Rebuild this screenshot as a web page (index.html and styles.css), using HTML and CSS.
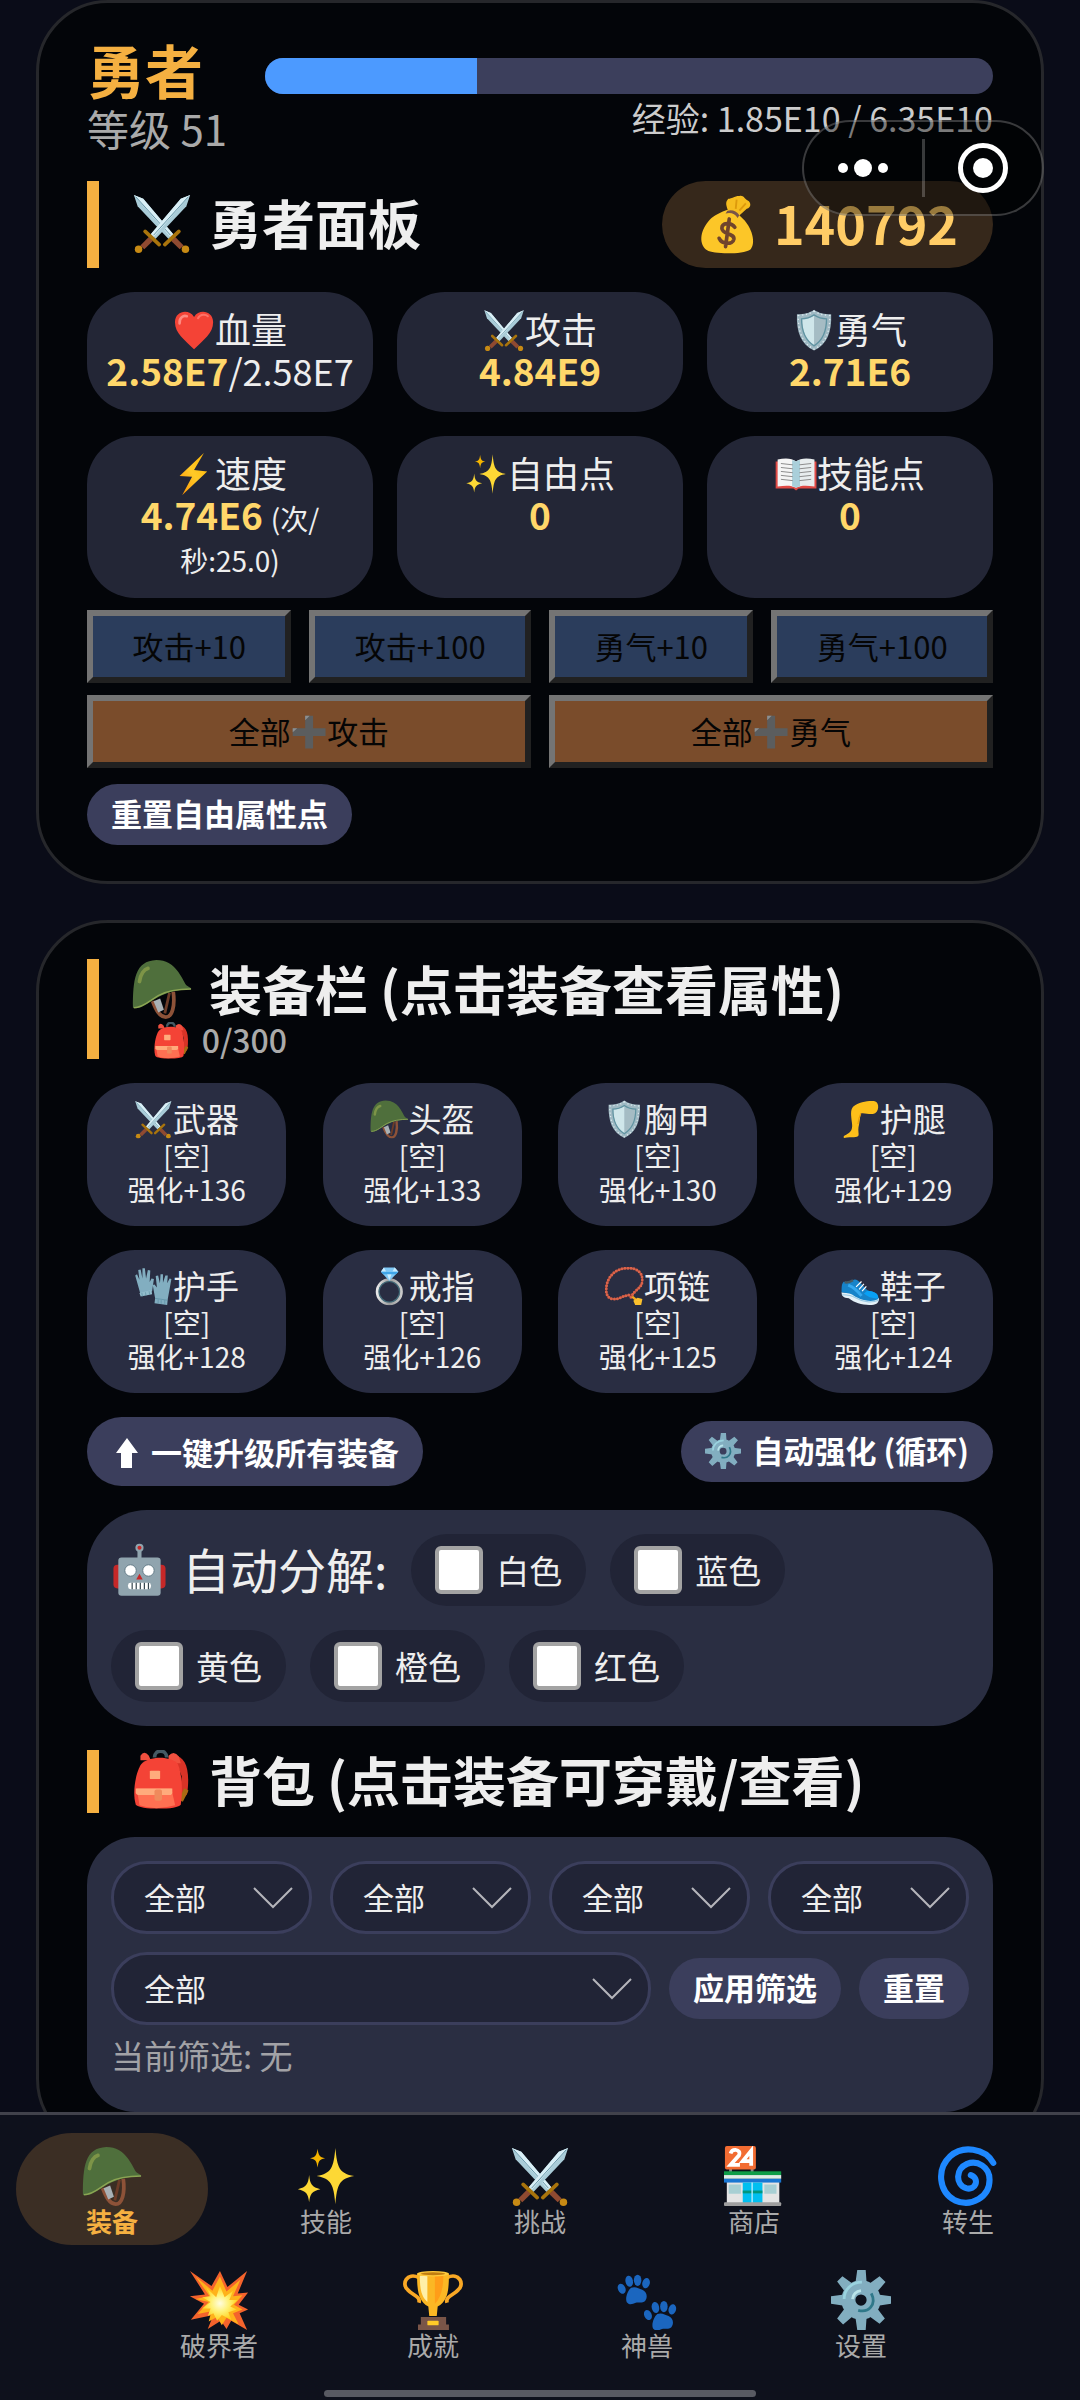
FILE: index.html
```html
<!DOCTYPE html>
<html lang="zh-CN">
<head>
    <meta charset="UTF-8">
    <meta name="viewport" content="width=device-width, initial-scale=1.0">
    <title>勇者</title>
    <link rel="stylesheet" href="styles.css">
</head>
<body>

<!-- 图标 -->
<svg class="sprite" width="0" height="0" aria-hidden="true">
    <defs>
        <linearGradient id="g-bolt" x1="1" y1="0" x2="0" y2="1"><stop offset="0" stop-color="#ffb300"/><stop offset=".5" stop-color="#ffca28"/><stop offset="1" stop-color="#ff8f00"/></linearGradient>
        <linearGradient id="g-metal"><stop offset="0" stop-color="#e8e8e8"/><stop offset=".5" stop-color="#9a9a9a"/><stop offset="1" stop-color="#c9c9c9"/></linearGradient>
        <radialGradient id="g-boom"><stop offset="0" stop-color="#fffde0"/><stop offset=".5" stop-color="#fff176"/><stop offset="1" stop-color="#ffd21f"/></radialGradient>
        <g id="blade">
            <path d="M2 2l4 12 33 35 5-5L12 6z" fill="#a9ccd8"/>
            <path d="M2 2l10 4 32 38-3 3z" fill="#d9eff6"/>
            <path d="M4 4l37 41" stroke="#5e8fa1" stroke-width="1"/>
            <path d="M44 49l9 9" stroke="#8f4a31" stroke-width="6"/>
            <path d="M35 55l15-14" stroke="#a9740c" stroke-width="4" stroke-linecap="round"/>
            <circle cx="57" cy="60" r="4" fill="#c78a14"/>
        </g>
        <path id="pad" d="M14 14c5-2 8 1 12 2 5 2 6 8 3 12-3 3-7 1-10 2s-6 3-9 0 0-13 4-16z" fill="#1b66bf"/>
    </defs>
    <symbol id="i-swords" viewBox="0 0 64 64">
        <use href="#blade"/>
        <g transform="matrix(-1 0 0 1 64 0)"><use href="#blade"/></g>
    </symbol>
    <symbol id="i-heart" viewBox="0 0 64 64">
        <path d="M32 61C18 47 3 37 3 20 3 3 24-1 32 12 40-1 61 3 61 20c0 17-15 27-29 41z" fill="#f44336"/>
        <path d="M10 22c-1-9 6-13 11-11" stroke="#ff8a80" stroke-width="4" fill="none" stroke-linecap="round"/>
        <path d="M38 14c4-7 12-6 15-3" stroke="#ff7267" stroke-width="3" fill="none" stroke-linecap="round"/>
    </symbol>
    <symbol id="i-shield" viewBox="0 0 64 64">
        <path d="M32 1c7 5 15 7 26 7 1 27-6 46-26 55C12 54 5 35 6 8c11 0 19-2 26-7z" fill="#9fb9c3"/>
        <path d="M32 3c7 5 14 6 24 7 0 25-6 42-24 51C14 52 8 35 8 10c10-1 17-2 24-7z" fill="none" stroke="#dfeaee" stroke-width="2" stroke-dasharray="2 4"/>
        <path d="M32 10c6 4 11 5 18 5 0 20-5 32-18 40z" fill="#a5bcc4"/>
        <path d="M32 10c-6 4-11 5-18 5 0 20 5 32 18 40z" fill="#cfe6ea"/>
        <path d="M32 9c6 4 12 6 19 6 0 21-6 33-19 41-13-8-19-20-19-41 7 0 13-2 19-6z" fill="none" stroke="#5f93a1" stroke-width="2"/>
    </symbol>
    <symbol id="i-bolt" viewBox="0 0 64 64">
        <path d="M47 0L10 35l19 1L14 64l38-36-20-2z" fill="url(#g-bolt)"/>
    </symbol>
    <symbol id="i-sparkles" viewBox="0 0 64 64">
        <path d="M42 2c2 21 4 27 20 30-16 3-18 9-20 30-2-21-4-27-20-30C38 29 40 23 42 2z" fill="#fdd835"/>
        <path d="M14 31c1 10 3 13 12 15-9 2-11 5-12 14-1-9-3-12-12-14 9-2 11-5 12-15z" fill="#fdd835"/>
        <path d="M23 3c1 7 2 9 8 10-6 1-7 3-8 10-1-7-2-9-8-10 6-1 7-3 8-10z" fill="#f4b400"/>
    </symbol>
    <symbol id="i-book" viewBox="0 0 64 64">
        <path d="M1 13h62v41H36l-4 3-4-3H1z" fill="#e04a45"/>
        <path d="M4 10c12-3 22-2 28 3v40c-7-4-16-4-28-2z" fill="#f5f5f5"/>
        <path d="M60 10c-12-3-22-2-28 3v40c7-4 16-4 28-2z" fill="#e8edee"/>
        <path d="M26 11q4 0 6 2 2-2 6-2v40q-4 0-6 2-2-2-6-2z" fill="#a9cfda"/>
        <path d="M9 16l18 2M9 22l18 2M9 28l18 2M9 34l18 2M9 40l18 2M55 16l-18 2M55 22l-18 2M55 28l-18 2M55 34l-18 2M55 40l-18 2" stroke="#8b8b8b" stroke-width="1.5"/>
    </symbol>
    <symbol id="i-plus" viewBox="0 0 64 64">
        <path d="M25 3h14v22h22v14H39v22H25V39H3V25h22z" fill="#5b5d5e"/>
        <path d="M25 3h8l-8 8zM3 25h8l-8 7z" fill="#8d8f90"/>
    </symbol>
    <symbol id="i-bag" viewBox="-2 0 66 66">
        <path d="M32 18c-2-6-4-10 0-14 4 0 6-3 12-3 5-1 5 3 9 5s4 8-1 9l-9 8z" fill="#f6bd1f"/>
        <path d="M40 15l1-10M44 17l7-8" stroke="#dd9a0c" stroke-width="2"/>
        <path d="M26 18c6-4 14-1 19 5 14 12 17 30 11 36-9 6-41 5-47 1C0 54 1 40 10 29c5-6 10-8 16-11z" fill="#fcc628"/>
        <path d="M31 17q8-2 13 5l-2 3q-4-7-13-5z" fill="#795548"/>
        <path d="M39 35c-4-6-14-5-14 1 0 7 14 5 13 12-1 6-13 6-16-1M33 26l-4 30" stroke="#70442c" stroke-width="4" fill="none" stroke-linecap="round"/>
    </symbol>
    <symbol id="i-helmet" viewBox="0 0 64 64">
        <path d="M22 45c3 8 7 17 14 17s10-12 8-27" fill="none" stroke="#8d5238" stroke-width="4"/>
        <path d="M40 36l-5 22" stroke="#6c3c28" stroke-width="3"/>
        <path d="M23 45l5 12 6-3-4-12z" fill="#a9b1b5"/>
        <path d="M1 52C1 22 3 2 26 1c21 0 27 20 32 27 2 2 5 2 5 4C45 33 35 36 22 44 14 49 8 54 1 52z" fill="#4f6f3c"/>
        <path d="M2 52C12 52 19 44 28 39s22-7 35-7" fill="none" stroke="#8ba553" stroke-width="1.5"/>
        <path d="M8 24c1-8 5-13 9-14" stroke="#7d9447" stroke-width="4" fill="none" stroke-linecap="round"/>
    </symbol>
    <symbol id="i-pack" viewBox="0 0 64 64">
        <path d="M24 8c0-9 13-9 13 0" fill="none" stroke="#455a64" stroke-width="4"/>
        <path d="M44 5c14 2 18 16 15 41-1 4-6 5-9 6l3-24z" fill="#d93327"/>
        <path d="M58 42l-6 12" stroke="#a86b12" stroke-width="5"/>
        <path d="M9 6q4-6 9 0l2 5H9zM39 6q6-6 11 1l2 7H39z" fill="#f0503f"/>
        <path d="M10 15c8-9 32-9 39 0 5 13 5 32 3 43-2 6-45 6-48 0C0 46 4 23 10 15z" fill="#f44336"/>
        <rect x="19" y="22" width="11" height="9" rx="1" fill="#ffab7c"/>
        <path d="M5 41h37l4 18q-21 6-38 0z" fill="#ff7052"/>
        <path d="M4 41h39v4q0 3-3 3H8q-4 0-4-3z" fill="#ffab7c"/>
        <rect x="24" y="42" width="8" height="12" rx="2" fill="#f08a5c"/>
    </symbol>
    <symbol id="i-leg" viewBox="0 0 64 64">
        <path d="M20 11C30 3 46 1 56 2c8 1 8 20-3 21-7 1-13-2-20-1-2 8-2 16-4 23-1 6 1 11 0 14-2 4-10 2-24 4-3-4 5-5 9-9 5-4 5-10 4-17-1-11-3-20 2-26z" fill="#fdbf1a"/>
        <path d="M33 22q-4 8-5 18" stroke="#eb9d08" stroke-width="2" fill="none"/>
    </symbol>
    <symbol id="i-gloves" viewBox="0 0 64 64">
        <path d="M2 14l3-2 4 9-2-16 4-1 3 15 0-17h4l2 17 3-14 4 1-1 19 3-6 4 1-3 20-19 6z" fill="#82aec0"/>
        <path d="M9 43l20-5 1 7-19 4z" fill="#91bccb"/>
        <path d="M13 43l1 6M19 42l1 6M25 40l1 6" stroke="#55889d" stroke-width="1"/>
        <path d="M62 20l-3-1-4 8 1-13h-4l-4 12v-14h-4l-1 15-3-13-4 1 2 19-4-5-3 1 4 22-1 8 21 3 1-10z" fill="#82aec0"/>
        <path d="M35 52l20 3M40 54v6M45 55v6M51 55v6" stroke="#55889d" stroke-width="1"/>
    </symbol>
    <symbol id="i-ring" viewBox="0 0 64 64">
        <circle cx="32" cy="41" r="20" fill="none" stroke="url(#g-metal)" stroke-width="5"/>
        <circle cx="32" cy="41" r="17" fill="none" stroke="#426a78" stroke-width="2"/>
        <path d="M23 1h18l6 7-15 15L18 8z" fill="#7fc8f5"/>
        <path d="M27 8l5 14 5-14zM23 1l-5 7h9zM41 1l6 7H37z" fill="#c8ecff"/>
        <path d="M18 8h29l-4 4H22z" fill="#3fa5e8"/>
    </symbol>
    <symbol id="i-beads" viewBox="0 0 64 64">
        <path d="M43 50C49 37 61 36 62 23 63 9 52 1 37 2 17 2 2 17 2 38c0 15 11 17 21 14 6-3 12-5 20-6" fill="none" stroke="#8a3322" stroke-width="3"/>
        <path d="M43 50C49 37 61 36 62 23 63 9 52 1 37 2 17 2 2 17 2 38c0 15 11 17 21 14 6-3 12-5 20-6" fill="none" stroke="#d9634b" stroke-width="5" stroke-linecap="round" stroke-dasharray="0 5"/>
        <path d="M45 49l7 6" stroke="#f5a81c" stroke-width="4"/>
        <path d="M47 56l7-5 8 2-2 10-10 0z" fill="#fbc02d"/>
    </symbol>
    <symbol id="i-shoe" viewBox="0 0 64 64">
        <path d="M1 42c0 7 3 9 12 10 10 8 24 12 38 11 9 0 12-5 12-11L48 46z" fill="#e4f1f8"/>
        <path d="M1 42c0-9 0-15 4-18 4 4 9 2 14-2 5-3 9 0 13 4l12 13c7 2 18 2 18 14-12 7-30 1-40-5C14 42 8 44 1 42z" fill="#1683c9"/>
        <path d="M6 25c5 2 9 0 14-3" stroke="#455a64" stroke-width="4" fill="none"/>
        <path d="M12 30c8 3 16 10 22 18" stroke="#35a9ef" stroke-width="5" fill="none"/>
        <path d="M44 39c7 2 18 2 18 13-8 1-18-2-24-8z" fill="#08a0f5"/>
        <path d="M25 33l9-9M30 37l8-9M35 40l7-8" stroke="#fff" stroke-width="2"/>
        <path d="M2 46c9 0 16 1 22 5 12 7 27 9 38 4" stroke="#9ccbe4" stroke-width="2" fill="none"/>
    </symbol>
    <symbol id="i-gear" viewBox="0 0 64 64">
        <g fill="#82aec0">
            <g id="teeth"><path d="M28 0h9l1 14H26zM26 50h12l-1 14h-9zM0 28l14-2v12L0 36zM64 28l-14-2v12l14-2z"/></g>
            <use href="#teeth" transform="rotate(45 32 32)"/>
            <path d="M32 11a21 21 0 1 0 0 42 21 21 0 0 0 0-42zm0 15a6 6 0 1 1 0 12 6 6 0 0 1 0-12z" fill-rule="evenodd"/>
        </g>
        <path d="M14 31c0-11 9-18 19-18" stroke="#9ad3df" stroke-width="3" fill="none"/>
        <path d="M23 31q1-8 9-9" stroke="#b9e4ea" stroke-width="3" fill="none"/>
        <path d="M43 25c6 12-3 21-14 18" stroke="#2f7889" stroke-width="3" fill="none"/>
    </symbol>
    <symbol id="i-robot" viewBox="-3 -2 69 69">
        <rect x="0" y="26" width="64" height="29" rx="5" fill="#c62828"/>
        <path d="M32 5v14" stroke="#90a4ae" stroke-width="5"/>
        <circle cx="32" cy="5" r="5" fill="#90a4ae"/><circle cx="32" cy="5" r="2.5" fill="#c62828"/>
        <rect x="6" y="17" width="52" height="47" rx="4" fill="#90a4ae"/>
        <circle cx="21" cy="33" r="7" fill="#fff" stroke="#546e7a" stroke-width="1"/><circle cx="43" cy="33" r="7" fill="#fff" stroke="#546e7a" stroke-width="1"/>
        <path d="M32 37l4 7h-8z" fill="#c62828"/>
        <rect x="18" y="48" width="28" height="8" rx="3" fill="#fff"/>
        <path d="M23 48v8M28 48v8M33 48v8M38 48v8M43 48v8" stroke="#37474f" stroke-width="1.5"/>
    </symbol>
    <symbol id="i-store" viewBox="0 0 64 64">
        <path d="M7 24v5M30 24v5" stroke="#888" stroke-width="3"/>
        <rect x="1" y="0" width="33" height="25" rx="2" fill="#f26c32"/>
        <path d="M7 8q1-4 5-4 6 1 4 6l-9 10h10M29 21V5l-9 11h11" fill="none" stroke="#fff" stroke-width="4"/>
        <rect x="3" y="36" width="56" height="26" fill="#e4e4e4"/>
        <rect x="0" y="27" width="61" height="4" fill="#0f9d48"/><rect x="0" y="31" width="61" height="4" fill="#e0eee6"/>
        <rect x="0" y="35" width="61" height="4" fill="#1976d2"/>
        <path d="M5 41h13v10H5zM43 41h13v10H43z" fill="#a8cfd3"/>
        <rect x="20" y="39" width="21" height="22" fill="#00bff0"/><path d="M20 49h21" stroke="#00967d" stroke-width="3"/><path d="M30 39v22" stroke="#b3ecff" stroke-width="1.5"/>
        <rect x="0" y="60" width="61" height="4" rx="1" fill="#9e9e9e"/>
    </symbol>
    <symbol id="i-cyclone" viewBox="0 0 64 64">
        <path d="M59 18C50 2 26-1 13 11-2 25 1 49 18 58c18 8 37-4 37-22 0-14-13-21-24-17-12 5-13 22-1 26 10 3 15-10 5-14" fill="none" stroke="#1e88ff" stroke-width="6.5" stroke-linecap="round"/>
    </symbol>
    <symbol id="i-boom" viewBox="0 0 64 64">
        <path d="M1 1l23 16L33 1l8 17L62 1 52 25l11-1-10 13 10 5-9 4 8 18-17-10-5 9-6-9-14 9 6-15-24 5 14-17L1 28l16-2z" fill="#f4632c"/>
        <path d="M7 7l18 15 8-15 7 16 15-13-8 18 10-1-9 10 9 5-10 4 6 12-13-7-5 8-5-9-9 5 3-11-15 3 12-13L7 31l15-3z" fill="#ffb21a"/>
        <path d="M18 18l11 11 4-12 5 12 9-7-4 10 9 0-8 7 7 3-9 3 3 8-10-5-5 6-4-8-6 3 3-8-9 0 9-7-9-5 9-1z" fill="url(#g-boom)"/>
    </symbol>
    <symbol id="i-trophy" viewBox="0 0 64 64">
        <path d="M17 8C4 2-2 15 5 21c5 6 14 7 12 14M47 8C60 2 66 15 59 21c-5 6-14 7-12 14" fill="none" stroke="#f9a825" stroke-width="4"/>
        <path d="M15 4h34c0 17-1 29-12 35l-1 10H28l-1-10C16 33 15 21 15 4z" fill="#fbb724"/>
        <path d="M18 6h8v28c-7-6-8-15-8-28z" fill="#fff0a8"/>
        <path d="M34 6h9c0 14-3 24-9 30z" fill="#ff9d18"/>
        <ellipse cx="32" cy="4" rx="17" ry="3" fill="#ffca3c"/><ellipse cx="32" cy="4" rx="13" ry="1.5" fill="#c07d10"/>
        <path d="M19 50h27v8h3v6H16v-6h3z" fill="#795548"/><rect x="26" y="54" width="12" height="5" rx="1" fill="#ffca28"/>
    </symbol>
    <symbol id="i-paw" viewBox="0 0 64 64">
        <g id="print" fill="#1b66bf">
            <use href="#pad" transform="translate(1 5)"/>
            <ellipse cx="5" cy="20" rx="4" ry="5.5" transform="rotate(-25 5 20)"/><ellipse cx="13" cy="12" rx="4" ry="6" transform="rotate(-12 13 12)"/>
            <ellipse cx="22" cy="11" rx="4" ry="6"/><ellipse cx="31" cy="14" rx="4" ry="5.5" transform="rotate(14 31 14)"/>
        </g>
        <use href="#print" transform="translate(28 28)"/>
    </symbol>
    <symbol id="i-up" viewBox="0 0 24 32">
        <path d="M12 1l11 15h-6v15H6V16H1z" fill="#fff"/>
    </symbol>
    <symbol id="i-chevron" viewBox="0 0 40 22">
        <path d="M1 1l19 19L39 1" fill="none" stroke="#b5b5bb" stroke-width="2"/>
    </symbol>
</svg>

<div class="app">
    <main class="content">

        <!-- 勇者面板 -->
        <section class="card">
            <header class="profile">
                <div>
                    <div class="hero-name">勇者</div>
                    <div class="hero-level">等级 51</div>
                </div>
                <div class="exp">
                    <div class="exp-bar"><div class="exp-fill" style="width: 29.13%"></div></div>
                    <div class="exp-text">经验: 1.85E10 / 6.35E10</div>
                </div>
            </header>

            <div class="title-row">
                <h2><svg class="icon"><use href="#i-swords"/></svg> 勇者面板</h2>
                <div class="gold"><svg class="icon"><use href="#i-bag"/></svg> 140792</div>
            </div>

            <div class="stats">
                <div class="stat"><svg class="icon"><use href="#i-heart"/></svg>血量<br><b>2.58E7</b>/2.58E7</div>
                <div class="stat"><svg class="icon"><use href="#i-swords"/></svg>攻击<br><b>4.84E9</b></div>
                <div class="stat"><svg class="icon"><use href="#i-shield"/></svg>勇气<br><b>2.71E6</b></div>
                <div class="stat"><svg class="icon"><use href="#i-bolt"/></svg>速度<br><b>4.74E6</b> <small>(次/<br>秒:25.0)</small></div>
                <div class="stat"><svg class="icon"><use href="#i-sparkles"/></svg>自由点<br><b>0</b></div>
                <div class="stat"><svg class="icon"><use href="#i-book"/></svg>技能点<br><b>0</b></div>
            </div>

            <div class="add-points">
                <div class="add-group">
                    <button class="add-btn" disabled>攻击+10</button>
                    <button class="add-btn" disabled>攻击+100</button>
                </div>
                <div class="add-group">
                    <button class="add-btn" disabled>勇气+10</button>
                    <button class="add-btn" disabled>勇气+100</button>
                </div>
                <button class="add-btn add-all" disabled>全部<svg class="icon"><use href="#i-plus"/></svg>攻击</button>
                <button class="add-btn add-all" disabled>全部<svg class="icon"><use href="#i-plus"/></svg>勇气</button>
            </div>

            <button class="pill">重置自由属性点</button>
        </section>

        <!-- 装备栏 -->
        <section class="card">
            <h2><svg class="icon"><use href="#i-helmet"/></svg> 装备栏 (点击装备查看属性)
                <span class="capacity"><svg class="icon"><use href="#i-pack"/></svg> 0/300</span>
            </h2>

            <div class="slots">
                <button class="slot"><span><svg class="icon"><use href="#i-swords"/></svg>武器</span>[空]<br>强化+136</button>
                <button class="slot"><span><svg class="icon"><use href="#i-helmet"/></svg>头盔</span>[空]<br>强化+133</button>
                <button class="slot"><span><svg class="icon"><use href="#i-shield"/></svg>胸甲</span>[空]<br>强化+130</button>
                <button class="slot"><span><svg class="icon"><use href="#i-leg"/></svg>护腿</span>[空]<br>强化+129</button>
                <button class="slot"><span><svg class="icon"><use href="#i-gloves"/></svg>护手</span>[空]<br>强化+128</button>
                <button class="slot"><span><svg class="icon"><use href="#i-ring"/></svg>戒指</span>[空]<br>强化+126</button>
                <button class="slot"><span><svg class="icon"><use href="#i-beads"/></svg>项链</span>[空]<br>强化+125</button>
                <button class="slot"><span><svg class="icon"><use href="#i-shoe"/></svg>鞋子</span>[空]<br>强化+124</button>
            </div>

            <div class="actions">
                <button class="pill pill-large"><svg class="arrow-up"><use href="#i-up"/></svg> 一键升级所有装备</button>
                <button class="pill"><svg class="icon"><use href="#i-gear"/></svg> 自动强化 (循环)</button>
            </div>

            <div class="decompose">
                <span class="decompose-title"><svg class="icon"><use href="#i-robot"/></svg> 自动分解:</span>
                <label class="chip"><input type="checkbox">白色</label>
                <label class="chip"><input type="checkbox">蓝色</label>
                <label class="chip"><input type="checkbox">黄色</label>
                <label class="chip"><input type="checkbox">橙色</label>
                <label class="chip"><input type="checkbox">红色</label>
            </div>

            <h2><svg class="icon"><use href="#i-pack"/></svg> 背包 (点击装备可穿戴/查看)</h2>

            <div class="filters">
                <div class="filter-row">
                    <div class="picker"><select aria-label="部位"><option>全部</option></select><svg><use href="#i-chevron"/></svg></div>
                    <div class="picker"><select aria-label="品质"><option>全部</option></select><svg><use href="#i-chevron"/></svg></div>
                    <div class="picker"><select aria-label="等级"><option>全部</option></select><svg><use href="#i-chevron"/></svg></div>
                    <div class="picker"><select aria-label="属性"><option>全部</option></select><svg><use href="#i-chevron"/></svg></div>
                </div>
                <div class="filter-row">
                    <div class="picker"><select aria-label="套装"><option>全部</option></select><svg><use href="#i-chevron"/></svg></div>
                    <button class="pill">应用筛选</button>
                    <button class="pill">重置</button>
                </div>
                <div class="filter-status">当前筛选: 无</div>
            </div>
        </section>
    </main>

    <nav class="tabs">
        <button class="tab active"><svg><use href="#i-helmet"/></svg>装备</button>
        <button class="tab"><svg><use href="#i-sparkles"/></svg>技能</button>
        <button class="tab"><svg><use href="#i-swords"/></svg>挑战</button>
        <button class="tab"><svg><use href="#i-store"/></svg>商店</button>
        <button class="tab"><svg><use href="#i-cyclone"/></svg>转生</button>
        <button class="tab"><svg><use href="#i-boom"/></svg>破界者</button>
        <button class="tab"><svg><use href="#i-trophy"/></svg>成就</button>
        <button class="tab"><svg><use href="#i-paw"/></svg>神兽</button>
        <button class="tab"><svg><use href="#i-gear"/></svg>设置</button>
    </nav>
</div>

<!-- 右上角胶囊 -->
<div class="capsule">
    <button aria-label="更多">
        <svg width="52" height="18" viewBox="0 0 52 18"><g fill="#fff"><circle cx="6" cy="9" r="5"/><circle cx="26" cy="9" r="9"/><circle cx="46" cy="9" r="5"/></g></svg>
    </button>
    <button aria-label="关闭">
        <svg width="50" height="50" viewBox="0 0 50 50"><circle cx="25" cy="25" r="22.5" fill="none" stroke="#fff" stroke-width="5"/><circle cx="25" cy="25" r="10" fill="#fff"/></svg>
    </button>
</div>
<div class="home-bar"></div>

</body>
</html>
```
FILE: styles.css
```css
* {
    box-sizing: border-box;
}
body {
    margin: 0;
    font-family: "Noto Sans CJK SC", "Noto Sans", sans-serif;
    font-size: 36px;
    color: #eee;
    background: #0a0c18;
}
button, select, input {
    font-family: inherit;
    margin: 0;
}
.sprite {
    position: absolute;
}
.app {
    display: flex;
    flex-direction: column;
    height: 100vh;
}
.content {
    flex: 1;
    min-height: 0;
    overflow-y: auto;
    scrollbar-width: none;
    padding: 0 36px;
}
.icon {
    width: 1.17em;
    height: 1.17em;
    margin: -0.2em 0;
    vertical-align: baseline;
}

/* 卡片 */
.card {
    padding: 36px 48px;
    margin-bottom: 36px;
    background: #030509;
    border: 3px solid #26272b;
    border-radius: 72px;
}
h2 {
    margin: 0 0 24px;
    padding: 0 0 4px 32px;
    border-left: 12px solid #f5b041;
    font-size: 53px;
    font-weight: bold;
    line-height: 59px;
}
h2 .icon, .gold .icon, .pill .icon, .decompose-title .icon {
    margin-right: 4px;
}
h2 > .icon {
    height: 60px;
    margin-bottom: -8px;
}

/* 等级和经验 */
.profile {
    display: flex;
    align-items: center;
    gap: 38px;
    margin-bottom: 24px;
}
.hero-name {
    font-size: 58px;
    font-weight: bold;
    line-height: 60px;
    color: #f5b041;
}
.hero-level {
    font-size: 42px;
    line-height: 58px;
    color: #aaa;
}
.exp {
    flex: 1;
}
.exp-bar {
    height: 36px;
    border-radius: 18px;
    background: #3c3f5c;
    overflow: hidden;
}
.exp-fill {
    height: 100%;
    background: #4c9aff;
}
.exp-text {
    margin-top: 4px;
    font-size: 34px;
    line-height: 40px;
    text-align: right;
    color: #ccc;
}
.title-row {
    display: flex;
    justify-content: space-between;
    margin-bottom: 24px;
}
.title-row h2 {
    margin: 0;
    line-height: 83px;
}
.gold {
    padding: 0 35px 4px;
    border-radius: 44px;
    background: #36281b;
    color: #ffcc66;
    font-size: 52px;
    font-weight: bold;
    line-height: 83px;
}

/* 属性 */
.stats {
    display: grid;
    grid-template-columns: repeat(3, 1fr);
    gap: 24px;
    margin-bottom: 12px;
}
.stat {
    padding: 15px 12px 21px;
    border-radius: 48px;
    background: #232636;
    text-align: center;
    line-height: 42px;
}
.stat b, .stat small {
    line-height: 1;
}
.stat b {
    font-size: 37px;
    color: #ffd76a;
}
.stat small {
    font-size: 28px;
}
.add-points {
    display: grid;
    grid-template-columns: 1fr 1fr;
    gap: 12px 18px;
    margin-bottom: 16px;
}
.add-group {
    display: flex;
    gap: 18px;
}
.add-btn {
    flex: 1 1 auto;
    height: 73px;
    padding: 0 12px 2px;
    border: 6px solid;
    border-color: #747474 #212121 #212121 #747474;
    background: #2b3d5c;
    color: #050505;
    font-size: 31px;
}
.add-all {
    background: #7a4c2b;
}
.pill {
    height: 61px;
    padding: 0 24px 3px;
    border: none;
    border-radius: 31px;
    background: #3b3e5c;
    color: #fff;
    font-size: 31px;
    font-weight: bold;
    line-height: 58px;
}
.card > .pill {
    display: block;
}

/* 装备 */
.capacity {
    display: block;
    margin: 3px 0 -3px;
    padding-left: 22px;
    font-size: 32px;
    font-weight: 500;
    line-height: 37px;
    color: #aaa;
}
.slots {
    display: grid;
    grid-template-columns: repeat(4, 22%);
    justify-content: space-between;
    gap: 24px 0;
    margin-bottom: 24px;
}
.slot {
    padding: 16px 0 20px;
    border: none;
    border-radius: 48px;
    background: #292d42;
    color: #eee;
    font-size: 28px;
    line-height: 34px;
}
.slot span {
    display: block;
    font-size: 33px;
    line-height: 39px;
}
.actions {
    display: flex;
    justify-content: space-between;
    align-items: center;
    margin-bottom: 24px;
}
.pill-large {
    height: 69px;
    padding: 0 24px 0 28px;
    border-radius: 35px;
    line-height: 69px;
}
.arrow-up {
    width: 24px;
    height: 32px;
    margin-right: 5px;
    vertical-align: -4px;
}
.decompose {
    display: flex;
    flex-wrap: wrap;
    gap: 24px;
    padding: 24px;
    margin-bottom: 24px;
    border-radius: 60px;
    background: #2a2e42;
}
.decompose-title {
    font-size: 48px;
    line-height: 68px;
}
.chip {
    display: flex;
    align-items: center;
    gap: 13px;
    height: 72px;
    padding: 0 24px;
    border-radius: 36px;
    background: #212436;
    font-size: 33px;
}
.chip input {
    appearance: none;
    width: 48px;
    height: 48px;
    border: 4px solid #a3a3a3;
    border-radius: 6px;
    background: #fff;
}
.chip input:checked {
    background: #4c9aff;
}

/* 筛选 */
.filters {
    padding: 24px;
    border-radius: 48px;
    background: #2a2e42;
}
.filter-row {
    display: flex;
    align-items: center;
    gap: 18px;
    margin-bottom: 18px;
}
.picker {
    flex: 1;
    display: grid;
    align-items: center;
}
.picker select, .picker svg {
    grid-area: 1 / 1;
}
.picker select {
    appearance: none;
    width: 100%;
    height: 73px;
    padding: 0 30px 2px;
    border: 3px solid #3b3e5c;
    border-radius: 36px;
    background: #212436;
    color: #eee;
    font-size: 31px;
}
.picker svg {
    justify-self: end;
    width: 40px;
    height: 22px;
    margin-right: 19px;
    pointer-events: none;
}
.filter-status {
    padding-bottom: 9px;
    margin-top: -12px;
    font-size: 33px;
    line-height: 48px;
    color: #a2a2a6;
}

/* 底部导航 */
.tabs {
    display: flex;
    flex-wrap: wrap;
    justify-content: center;
    row-gap: 12px;
    padding: 18px 5px 31px;
    border-top: 3px solid #41424b;
    background: #0e111c;
}
.tab {
    display: flex;
    flex-direction: column;
    align-items: center;
    width: 18%;
    height: 112px;
    margin: 0 1%;
    padding: 13px 0 0;
    border: none;
    border-radius: 56px;
    background: none;
    color: #aaa;
    font-size: 26px;
    line-height: 30px;
}
.tab svg {
    width: 60px;
    height: 60px;
}
.tab.active {
    background: #3b2e24;
    color: #f5b041;
    font-weight: bold;
}

/* 悬浮按钮 */
.capsule {
    position: absolute;
    top: 120px;
    right: 36px;
    display: flex;
    width: 242px;
    height: 96px;
    padding: 17px 0;
    border: 2px solid rgba(255, 255, 255, 0.22);
    border-radius: 48px;
    background: rgba(0, 0, 0, 0.4);
}
.capsule button {
    display: flex;
    flex: 1;
    align-items: center;
    justify-content: center;
    padding: 0;
    border: none;
    background: none;
}
.capsule button + button {
    border-left: 3px solid rgba(255, 255, 255, 0.22);
}
.home-bar {
    position: absolute;
    bottom: 3px;
    left: 30%;
    width: 40%;
    height: 7px;
    border-radius: 4px;
    background: #585a62;
}
```
